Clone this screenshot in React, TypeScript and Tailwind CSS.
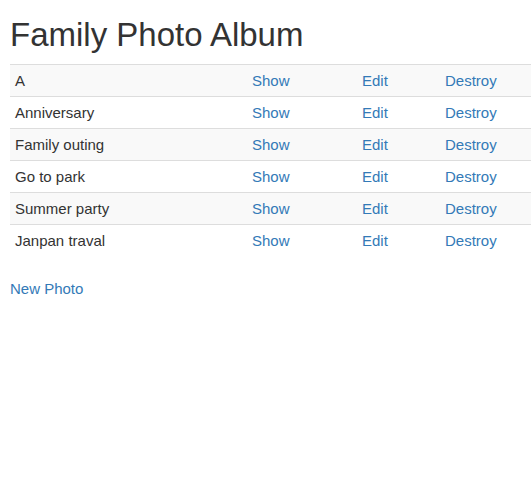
import React from "react";

const photos = ["A", "Anniversary", "Family outing", "Go to park", "Summer party", "Janpan traval"];

export default function App() {
  return (
    <div className="min-h-screen bg-white px-[10px] text-[15px] text-[#333] font-['Liberation_Sans',Arial,sans-serif]">
      <h1 className="mt-[17px] mb-[11px] text-[33px] leading-[36px] font-normal">Family Photo Album</h1>
      <table className="w-[521px] border-collapse table-fixed mb-[22px]">
        <colgroup>
          <col className="w-[237px]" />
          <col className="w-[110px]" />
          <col className="w-[83px]" />
          <col />
        </colgroup>
        <tbody>
          {photos.map((title, i) => (
            <tr key={title} className={i % 2 === 0 ? "bg-[#f9f9f9]" : "bg-white"}>
              <td className="border-t border-[#ddd] px-[5px] py-[5px] leading-[21px]">{title}</td>
              <td className="border-t border-[#ddd] px-[5px] py-[5px] leading-[21px]">
                <a href="#" className="text-[#337ab7]">Show</a>
              </td>
              <td className="border-t border-[#ddd] px-[5px] py-[5px] leading-[21px]">
                <a href="#" className="text-[#337ab7]">Edit</a>
              </td>
              <td className="border-t border-[#ddd] px-[5px] py-[5px] leading-[21px]">
                <a href="#" className="text-[#337ab7]">Destroy</a>
              </td>
            </tr>
          ))}
        </tbody>
      </table>
      <a href="#" className="text-[#337ab7] leading-[21px]">New Photo</a>
    </div>
  );
}
